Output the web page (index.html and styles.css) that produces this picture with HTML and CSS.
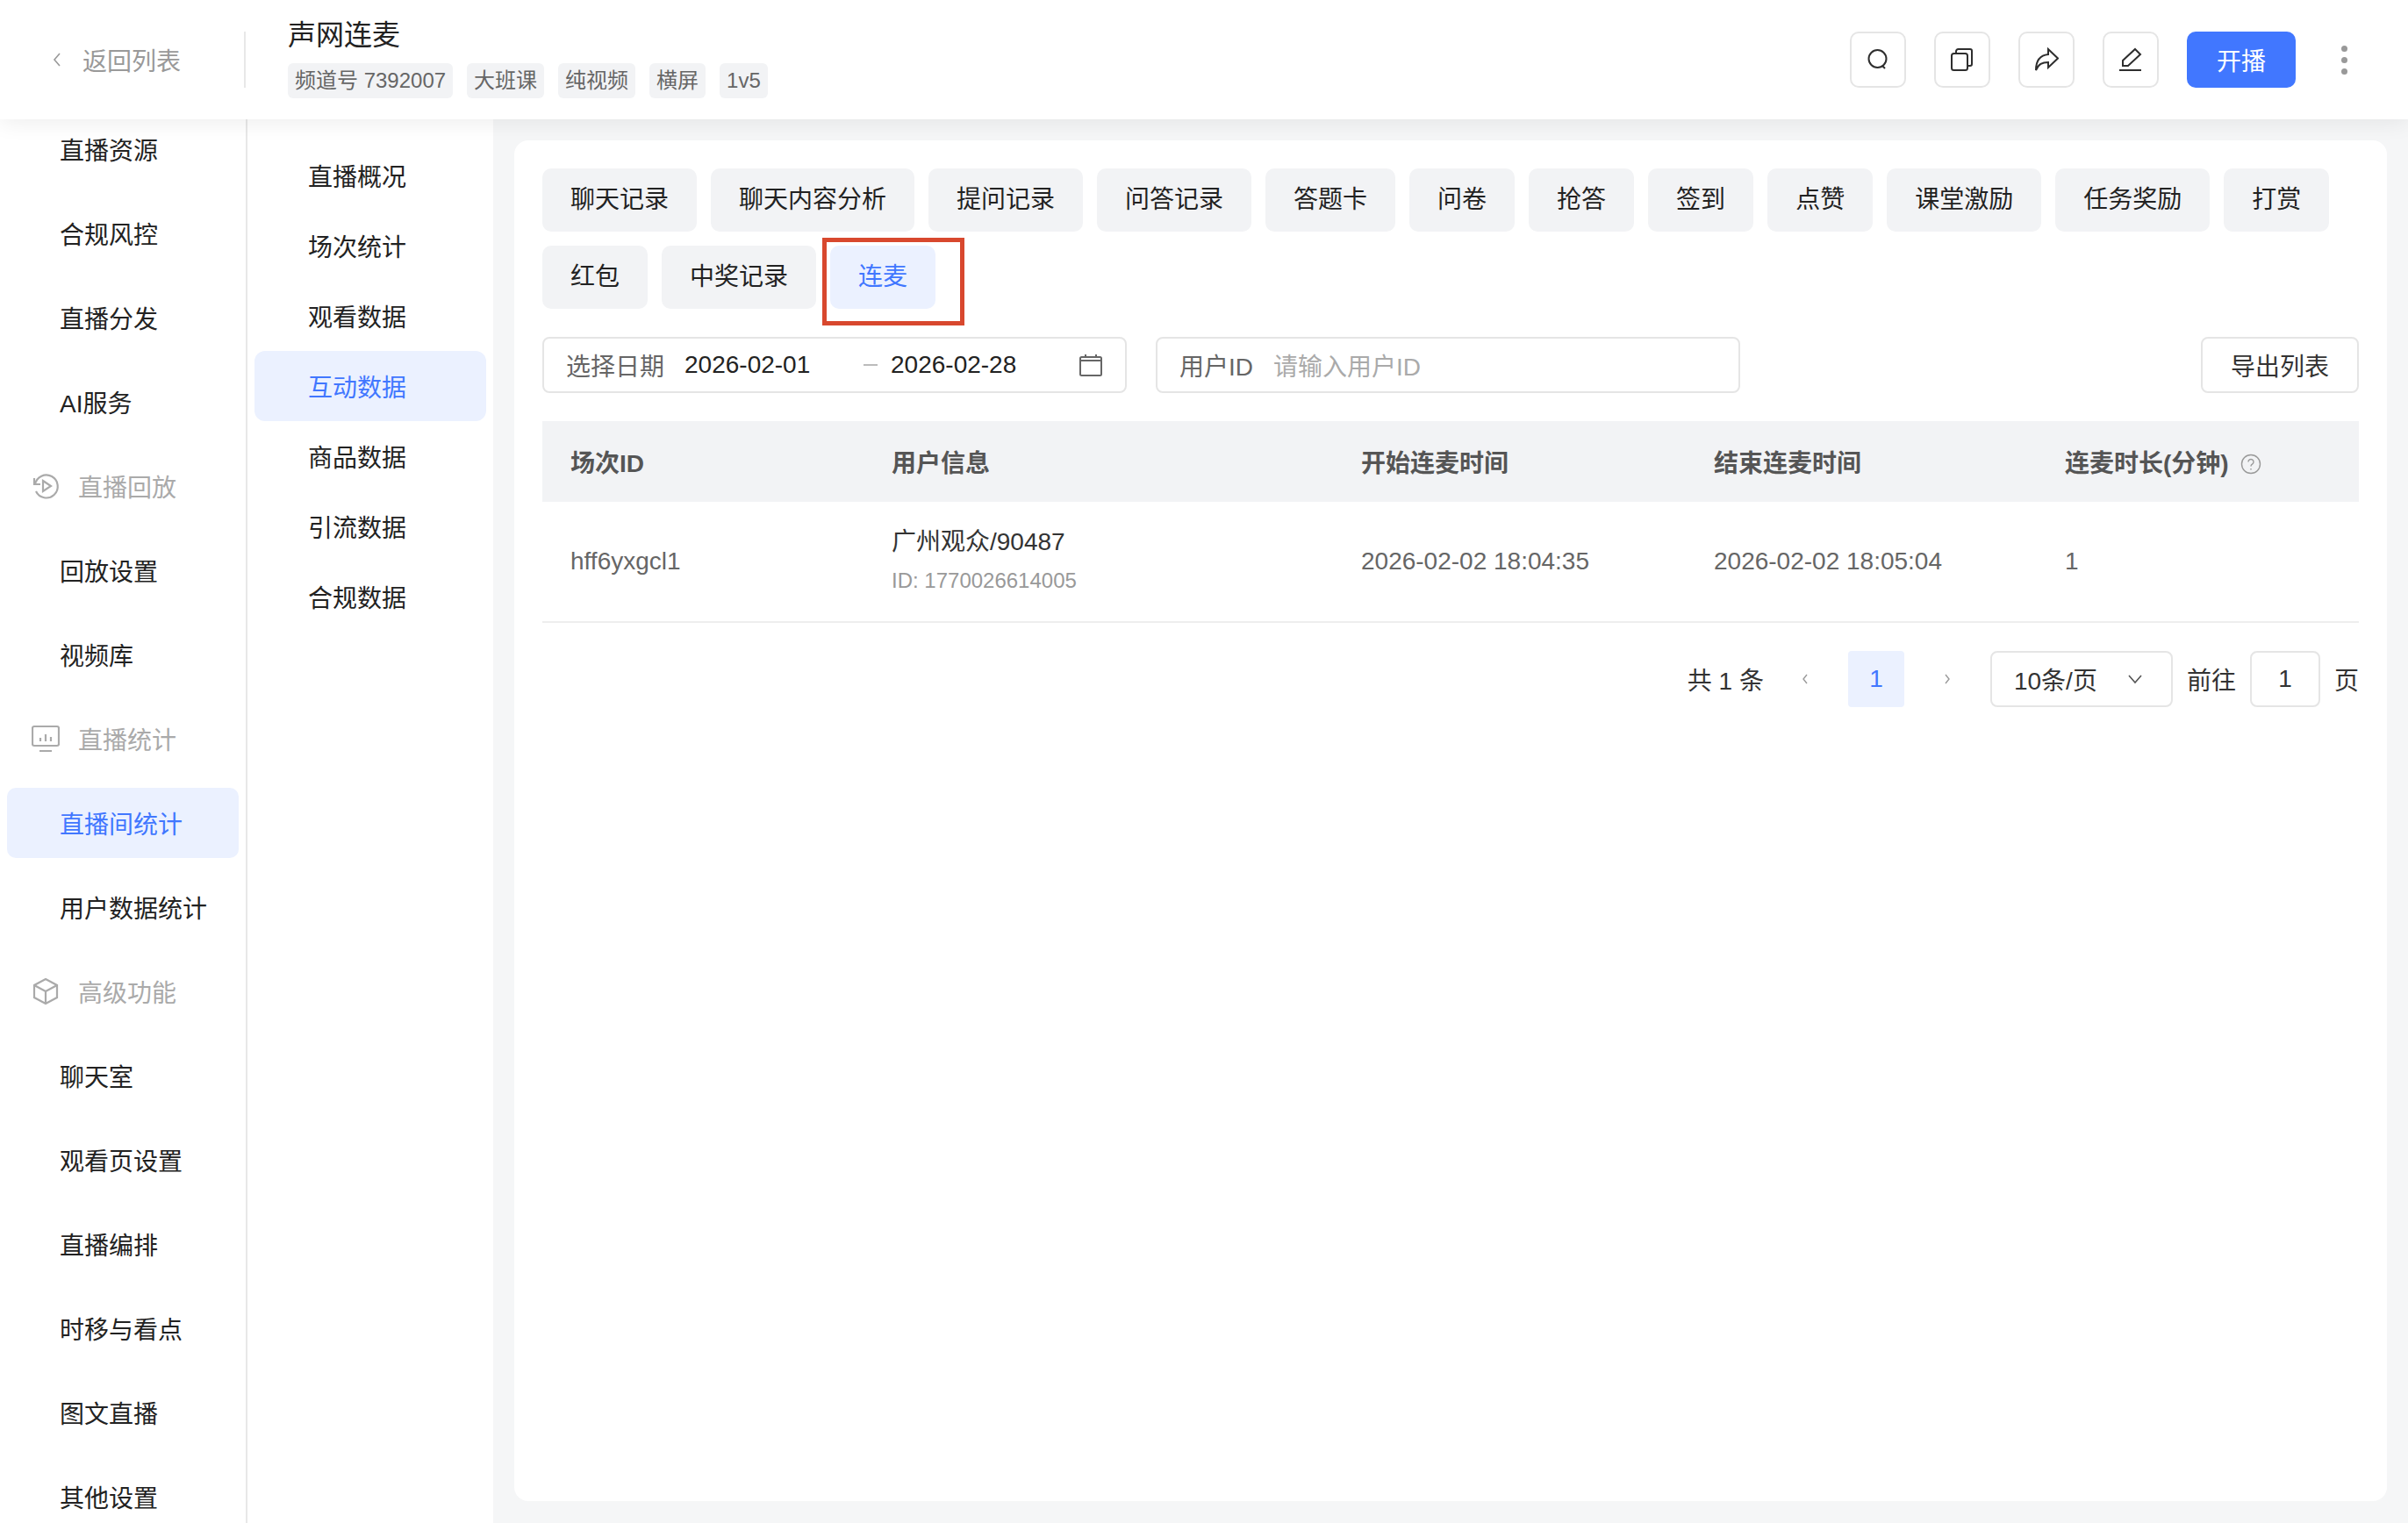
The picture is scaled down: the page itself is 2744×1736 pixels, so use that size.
FILE: index.html
```html
<!DOCTYPE html>
<html lang="zh-CN">
<head>
  <meta charset="UTF-8">
  <title>声网连麦</title>
  <link rel="stylesheet" href="styles.css">
</head>
<body>

  <header class="topbar">
    <a class="back">
      <svg class="back-icon" viewBox="0 0 12 20"><path d="M9 3 3 10l6 7"/></svg>
      <span>返回列表</span>
    </a>
    <div class="channel">
      <div class="channel-name">声网连麦</div>
      <div class="tags">
        <span class="tag">频道号 7392007</span>
        <span class="tag">大班课</span>
        <span class="tag">纯视频</span>
        <span class="tag">横屏</span>
        <span class="tag">1v5</span>
      </div>
    </div>
    <div class="actions">
      <button class="icon-btn">
        <svg viewBox="0 0 28 28"><circle cx="13.5" cy="13" r="10"/><path d="m19 21 3 3"/></svg>
      </button>
      <button class="icon-btn">
        <svg viewBox="0 0 28 28"><rect x="2" y="7" width="18" height="19" rx="2.5"/><path d="M7 7V4.5A2.5 2.5 0 0 1 9.500 2H23a2 2 0 0 1 2 2v15a2 2 0 0 1-2 2h-3"/></svg>
      </button>
      <button class="icon-btn">
        <svg viewBox="0 0 28 28"><path d="M16 2v6C7 9 2 15 2 26c3-7 7-9 14-9v6l11-10.500Z"/></svg>
      </button>
      <button class="icon-btn">
        <svg viewBox="0 0 28 28"><path d="M19 2 25 8 11 21H5v-6Z"/><path d="M1 26h25"/></svg>
      </button>
      <button class="start-btn">开播</button>
      <div class="more"><i></i><i></i><i></i></div>
    </div>
  </header>

  <div class="layout">
    <nav class="side">
      <a class="side-item">直播资源</a>
      <a class="side-item">合规风控</a>
      <a class="side-item">直播分发</a>
      <a class="side-item">AI服务</a>
      <a class="side-group">
        <svg viewBox="0 0 32 32"><path d="M3 7v7h7"/><path d="M4 14A13 13 0 1 1 5 22"/><path d="m13 10 9 6-9 6Z"/></svg>
        <span>直播回放</span>
      </a>
      <a class="side-item">回放设置</a>
      <a class="side-item">视频库</a>
      <a class="side-group">
        <svg viewBox="0 0 32 32"><rect x="1" y="2" width="30" height="22" rx="2"/><path d="M9 30h14M10 15v4M16 11v8M22 14v5"/></svg>
        <span>直播统计</span>
      </a>
      <a class="side-item active">直播间统计</a>
      <a class="side-item">用户数据统计</a>
      <a class="side-group">
        <svg viewBox="0 0 32 32"><path d="m16 2 13 7v14l-13 7-13-7V9Z"/><path d="m3 9 13 7 13-7M16 16v14"/></svg>
        <span>高级功能</span>
      </a>
      <a class="side-item">聊天室</a>
      <a class="side-item">观看页设置</a>
      <a class="side-item">直播编排</a>
      <a class="side-item">时移与看点</a>
      <a class="side-item">图文直播</a>
      <a class="side-item">其他设置</a>
    </nav>

    <nav class="subside">
      <a class="sub-item">直播概况</a>
      <a class="sub-item">场次统计</a>
      <a class="sub-item">观看数据</a>
      <a class="sub-item active">互动数据</a>
      <a class="sub-item">商品数据</a>
      <a class="sub-item">引流数据</a>
      <a class="sub-item">合规数据</a>
    </nav>

    <main class="content">
      <section class="card">
        <div class="tabs">
          <a class="tab">聊天记录</a>
          <a class="tab">聊天内容分析</a>
          <a class="tab">提问记录</a>
          <a class="tab">问答记录</a>
          <a class="tab">答题卡</a>
          <a class="tab">问卷</a>
          <a class="tab">抢答</a>
          <a class="tab">签到</a>
          <a class="tab">点赞</a>
          <a class="tab">课堂激励</a>
          <a class="tab">任务奖励</a>
          <a class="tab">打赏</a>
          <a class="tab">红包</a>
          <a class="tab">中奖记录</a>
          <a class="tab active">连麦</a>
        </div>

        <div class="filters">
          <div class="field date-field">
            <span class="field-label">选择日期</span>
            <span class="date-start">2026-02-01</span>
            <span class="date-sep"></span>
            <span class="date-end">2026-02-28</span>
            <svg class="calendar" viewBox="0 0 26 26"><path d="M1 8h24M7 1v4M19 1v4"/><rect x="1" y="4" width="24" height="21" rx="1.500"/></svg>
          </div>
          <div class="field user-field">
            <span class="field-label">用户ID</span>
            <span class="placeholder">请输入用户ID</span>
          </div>
          <button class="export-btn">导出列表</button>
        </div>

        <div class="table">
          <div class="table-row table-head">
            <div>场次ID</div>
            <div>用户信息</div>
            <div>开始连麦时间</div>
            <div>结束连麦时间</div>
            <div class="head-help">连麦时长(分钟)
              <svg viewBox="0 0 24 24"><circle cx="12" cy="12" r="10.500"/><path d="M9 9.500a3 3 0 1 1 4.500 2.600c-1 .6-1.500 1.200-1.500 2.400M12 17v1.500"/></svg>
            </div>
          </div>
          <div class="table-row table-body">
            <div>hff6yxgcl1</div>
            <div>
              <div class="user-name">广州观众/90487</div>
              <div class="user-id">ID: 1770026614005</div>
            </div>
            <div>2026-02-02 18:04:35</div>
            <div>2026-02-02 18:05:04</div>
            <div>1</div>
          </div>
        </div>

        <div class="pager">
          <span class="pager-total">共 1 条</span>
          <svg class="pager-arrow" viewBox="0 0 10 16"><path d="M7 3 3 8l4 5"/></svg>
          <span class="pager-num">1</span>
          <svg class="pager-arrow" viewBox="0 0 10 16"><path d="m3 3 4 5-4 5"/></svg>
          <div class="page-size">
            <span>10条/页</span>
            <svg viewBox="0 0 18 12"><path d="m2 2 7 8 7-8"/></svg>
          </div>
          <span>前往</span>
          <span class="page-input">1</span>
          <span>页</span>
        </div>
      </section>
    </main>
  </div>

</body>
</html>
```

FILE: styles.css
```css
* {
  box-sizing: border-box;
}
html, body {
  height: 100%;
}
body {
  margin: 0;
  overflow: hidden;
  display: flex;
  flex-direction: column;
  background: #fff;
  color: #333;
  font-family: "Liberation Sans", "Noto Sans CJK SC", sans-serif;
  font-size: 28px;
}
button {
  font: inherit;
  background: none;
  padding: 0;
}

/* top bar */
.topbar {
  flex: none;
  height: 136px;
  display: flex;
  align-items: center;
  background: #fff;
  box-shadow: 0 4px 24px rgba(0,0,0,0.07);
  position: relative;
  z-index: 2;
}
.back {
  width: 280px;
  height: 64px;
  display: flex;
  align-items: center;
  gap: 22px;
  padding-left: 58px;
  color: #999;
  border-right: 2px solid #e8e8e8;
}
.back-icon {
  width: 14px;
  height: 20px;
  fill: none;
  stroke: #999;
  stroke-width: 1.6;
}
.channel {
  margin-left: 48px;
}
.channel-name {
  font-size: 32px;
  line-height: 40px;
  color: #222;
  margin-top: -4px;
}
.tags {
  display: flex;
  gap: 16px;
  margin-top: 12px;
}
.tag {
  height: 40px;
  line-height: 40px;
  padding: 0 8px;
  background: #f2f3f5;
  border-radius: 6px;
  font-size: 24px;
  color: #666;
}
.actions {
  margin-left: auto;
  display: flex;
  align-items: center;
  gap: 32px;
  padding-right: 68px;
}
.icon-btn {
  width: 64px;
  height: 64px;
  display: flex;
  align-items: center;
  justify-content: center;
  border: 2px solid #e5e5e5;
  border-radius: 10px;
}
.icon-btn svg {
  width: 28px;
  height: 28px;
  fill: none;
  stroke: #2e2e2e;
  stroke-width: 2;
}
.start-btn {
  width: 124px;
  height: 64px;
  border: 0;
  border-radius: 10px;
  background: #4177ff;
  color: #fff;
}
.more {
  width: 8px;
  margin-left: 20px;
  display: flex;
  flex-direction: column;
  gap: 6px;
}
.more i {
  width: 7px;
  height: 7px;
  border-radius: 50%;
  background: #999;
}

/* body layout */
.layout {
  flex: 1;
  min-height: 0;
  display: flex;
}
.side {
  flex: none;
  width: 282px;
  border-right: 2px solid #e8e8e8;
  overflow: hidden;
  display: flex;
  flex-direction: column;
  gap: 16px;
  padding: 0 8px;
  margin-top: -6px; /* list is scrolled a little under the top bar */
}
.side-item, .side-group {
  flex: none;
  height: 80px;
  display: flex;
  align-items: center;
  border-radius: 10px;
  color: #222;
}
.side-item {
  padding-left: 60px;
}
.side-item.active {
  background: #ebf1ff;
  color: #4177ff;
}
.side-group {
  padding-left: 28px;
  gap: 21px;
  color: #aaa;
}
.side-group svg {
  width: 32px;
  height: 32px;
  fill: none;
  stroke: #aaa;
  stroke-width: 2.2;
}
.subside {
  flex: none;
  width: 280px;
  padding: 24px 8px 0;
}
.sub-item {
  height: 80px;
  display: flex;
  align-items: center;
  padding-left: 61px;
  border-radius: 12px;
  color: #222;
}
.sub-item.active {
  background: #ebf1ff;
  color: #4177ff;
}
.content {
  flex: 1;
  min-width: 0;
  background: #f5f6f7;
  padding: 24px 24px 25px;
  display: flex;
}
.card {
  flex: 1;
  min-width: 0;
  background: #fff;
  border-radius: 16px;
  padding: 32px;
}

/* tabs */
.tabs {
  display: flex;
  flex-wrap: wrap;
  gap: 16px;
}
.tab {
  height: 72px;
  line-height: 72px;
  padding: 0 32px;
  background: #f2f3f5;
  border-radius: 10px;
  color: #222;
}
.tab.active {
  background: #ebf1ff;
  color: #4177ff;
  position: relative;
}
.tab.active::after {
  content: "";
  position: absolute;
  top: -9px;
  left: -9px;
  width: 152px;
  height: 90px;
  border: 5px solid #d8482e;
}

/* filters */
.filters {
  display: flex;
  align-items: center;
  margin-top: 32px;
}
.field {
  height: 64px;
  display: flex;
  align-items: center;
  border: 2px solid #e5e5e5;
  border-radius: 8px;
  padding-left: 25px;
  color: #666;
}
.date-field {
  width: 666px;
}
.date-start {
  margin-left: 23px;
  width: 204px;
  color: #222;
}
.date-sep {
  width: 16px;
  height: 2px;
  background: #bbb;
}
.date-end {
  margin-left: 15px;
  width: 215px;
  color: #222;
}
.calendar {
  width: 26px;
  height: 26px;
  fill: none;
  stroke: #666;
  stroke-width: 2;
}
.user-field {
  width: 666px;
  margin-left: 33px;
  gap: 23px;
}
.placeholder {
  color: #aaa;
}
.export-btn {
  width: 180px;
  height: 64px;
  margin-left: auto;
  border: 2px solid #e5e5e5;
  border-radius: 8px;
  color: #333;
}

/* table */
.table {
  margin-top: 32px;
}
.table-row {
  display: grid;
  grid-template-columns: 366px 535px 402px 400px 1fr;
  align-items: center;
}
.table-row > div {
  padding-left: 32px;
}
.table-head {
  height: 92px;
  background: #f2f3f5;
  color: #555;
  font-weight: bold;
}
.head-help svg {
  width: 24px;
  height: 24px;
  margin-left: 6px;
  vertical-align: -3px;
  fill: none;
  stroke: #999;
  stroke-width: 1.4;
}
.table-body {
  height: 138px;
  border-bottom: 2px solid #eee;
  color: #666;
}
.user-name {
  color: #333;
  line-height: 32px;
}
.user-id {
  color: #999;
  font-size: 24px;
  line-height: 32px;
  margin-top: 12px;
}

/* pagination */
.pager {
  display: flex;
  align-items: center;
  justify-content: flex-end;
  margin-top: 32px;
  color: #333;
}
.pager-total {
  margin-right: 42px;
}
.pager-arrow {
  width: 10px;
  height: 16px;
  fill: none;
  stroke: #999;
  stroke-width: 1.4;
}
.pager-num {
  width: 64px;
  height: 64px;
  line-height: 64px;
  margin: 0 44px;
  text-align: center;
  background: #ebf1ff;
  border-radius: 4px;
  color: #4177ff;
}
.page-size {
  width: 208px;
  height: 64px;
  margin: 0 16px 0 44px;
  padding: 0 32px 0 25px;
  display: flex;
  align-items: center;
  justify-content: space-between;
  border: 2px solid #e5e5e5;
  border-radius: 8px;
}
.page-size svg {
  width: 18px;
  height: 12px;
  fill: none;
  stroke: #555;
  stroke-width: 1.6;
}
.page-input {
  width: 80px;
  height: 64px;
  line-height: 60px;
  margin: 0 16px;
  text-align: center;
  border: 2px solid #e5e5e5;
  border-radius: 8px;
}
```
